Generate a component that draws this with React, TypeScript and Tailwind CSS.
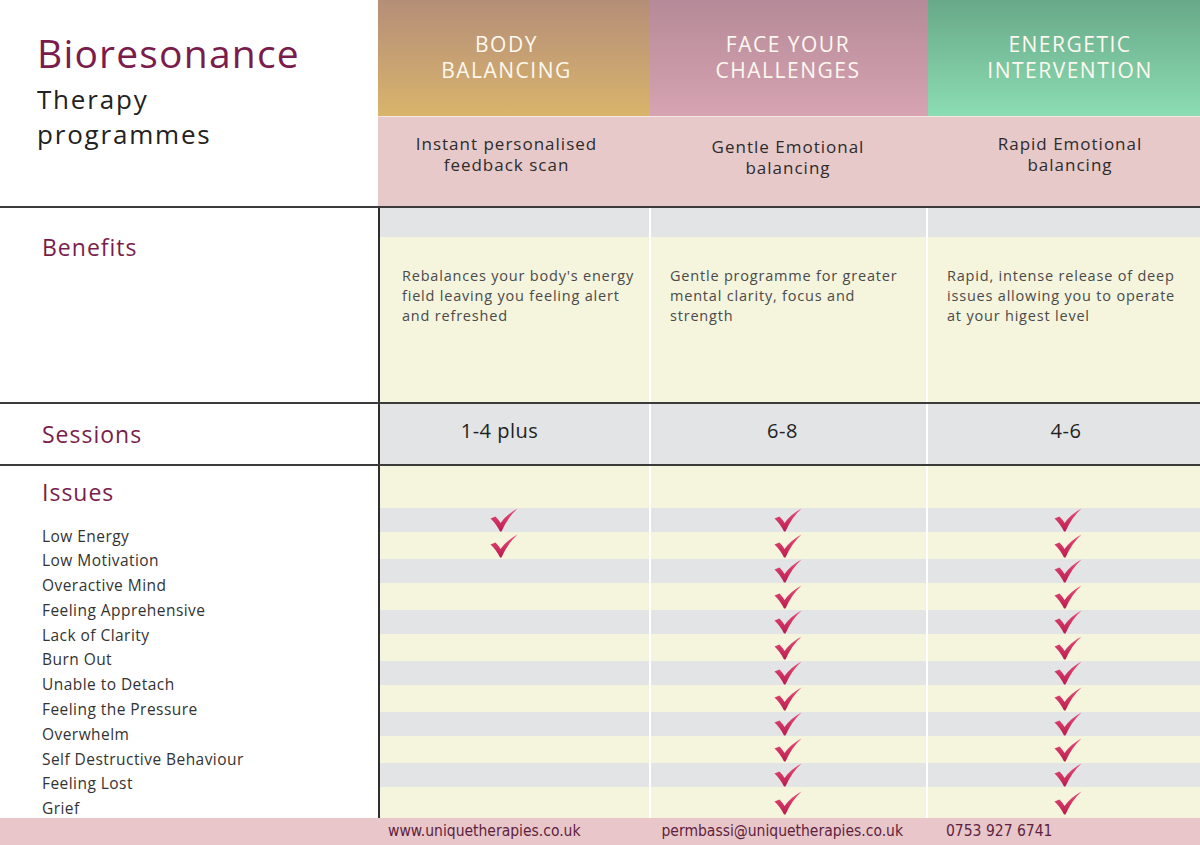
const ISSUES = [
  "Low Energy",
  "Low Motivation",
  "Overactive Mind",
  "Feeling Apprehensive",
  "Lack of Clarity",
  "Burn Out",
  "Unable to Detach",
  "Feeling the Pressure",
  "Overwhelm",
  "Self Destructive Behaviour",
  "Feeling Lost",
  "Grief",
];

const PROGRAMMES = [
  {
    title: ["BODY", "BALANCING"],
    bg: "bg-gradient-to-b from-[#b58e78] to-[#d9b46a]",
    headPad: "pr-[15px]",
    sub: ["Instant personalised", "feedback scan"],
    subPad: "pt-[16px]",
    benefit: "Rebalances your body's energy field leaving you feeling alert and refreshed",
    benefitPad: "pl-[22px] pr-[8px]",
    sessions: "1-4 plus",
    sessionsPad: "pr-[30px]",
    checks: 2,
    checkPad: "pr-[22px]",
  },
  {
    title: ["FACE YOUR", "CHALLENGES"],
    bg: "bg-gradient-to-b from-[#b68a98] to-[#d6a3b2]",
    headPad: "pr-[2px]",
    sub: ["Gentle Emotional", "balancing"],
    subPad: "pt-[19px]",
    benefit: "Gentle programme for greater mental clarity, focus and strength",
    benefitPad: "pl-[19px] pr-[12px]",
    sessions: "6-8",
    sessionsPad: "pr-[12px]",
    checks: 12,
    checkPad: "pr-[2px]",
  },
  {
    title: ["ENERGETIC", "INTERVENTION"],
    bg: "bg-gradient-to-b from-[#68a989] to-[#8cddb3]",
    headPad: "pl-[12px]",
    sub: ["Rapid Emotional", "balancing"],
    subPad: "pt-[16px]",
    benefit: "Rapid, intense release of deep issues allowing you to operate at your higest level",
    benefitPad: "pl-[19px] pr-[10px]",
    sessions: "4-6",
    sessionsPad: "pl-[4px]",
    checks: 12,
    checkPad: "pl-[8px]",
  },
];

function Tick() {
  return (
    <svg width="28" height="24" viewBox="0 0 28 24">
      <defs>
        <linearGradient id="tickFill" x1="0" y1="0" x2="0" y2="1">
          <stop offset="0" stopColor="#ec4f7c" />
          <stop offset="1" stopColor="#b81c4e" />
        </linearGradient>
      </defs>
      <path
        d="M0.5 10.5 L5.5 8.5 Q8.5 11.5 10.5 15 Q17 6 27.5 0.5 Q18 9 11.5 23.5 L10 23.5 Q6 15.5 0.5 10.5 Z"
        fill="url(#tickFill)"
      />
    </svg>
  );
}

const rowGrid = "grid grid-cols-[269px_275px_1fr] gap-[2px] bg-white";
const rule = "h-[2px] shrink-0 bg-[#3b3b3b]";

export default function App() {
  return (
    <div className="flex flex-col w-[1200px] h-[845px] bg-white overflow-hidden font-['Open_Sans',sans-serif]">
      {/* header */}
      <div className="flex h-[206px] shrink-0">
        <div className="w-[378px] pl-[37px] pt-[28px]">
          <h1 className="text-[39px] leading-[50px] text-[#7a1d4c] tracking-[1.2px]">Bioresonance</h1>
          <p className="mt-[4px] text-[26px] leading-[35px] tracking-[1.8px] text-[#222]">
            Therapy
            <br />
            programmes
          </p>
        </div>
        <div className="flex-1 grid grid-cols-[272px_278px_1fr]">
          {PROGRAMMES.map((p) => (
            <div key={p.title[0]} className="flex flex-col">
              <div className={`h-[116px] flex flex-col items-center justify-center pb-[3px] ${p.headPad} ${p.bg}`}>
                {p.title.map((t) => (
                  <span key={t} className="text-[21px] leading-[26px] tracking-[1.5px] text-[#fdf9f0]">
                    {t}
                  </span>
                ))}
              </div>
              <div className="h-[1px] bg-[#f3e7e4]" />
              <div className={`flex-1 bg-[#e8c9ca] flex flex-col items-center ${p.headPad} ${p.subPad}`}>
                {p.sub.map((s) => (
                  <span key={s} className="text-[17px] leading-[21px] tracking-[1px] text-[#2c2c2c]">
                    {s}
                  </span>
                ))}
              </div>
            </div>
          ))}
        </div>
      </div>

      <div className={rule} />

      {/* benefits */}
      <div className="flex h-[194px] shrink-0">
        <div className="w-[380px] pl-[42px] pt-[24px] border-r-2 border-[#2f2f2f]">
          <h2 className="text-[23px] leading-[30px] tracking-[1px] text-[#7a1d4c]">Benefits</h2>
        </div>
        <div className={`flex-1 ${rowGrid}`}>
          {PROGRAMMES.map((p) => (
            <div key={p.title[0]} className="flex flex-col">
              <div className="h-[29px] bg-[#e3e4e5]" />
              <div className={`flex-1 bg-[#f5f4dd] pt-[29px] ${p.benefitPad}`}>
                <p className="text-[14.5px] leading-[20px] tracking-[0.8px] text-[#4a4a4a]">{p.benefit}</p>
              </div>
            </div>
          ))}
        </div>
      </div>

      <div className={rule} />

      {/* sessions */}
      <div className="flex h-[60px] shrink-0">
        <div className="w-[380px] pl-[42px] flex items-center border-r-2 border-[#2f2f2f]">
          <h2 className="text-[23px] leading-[30px] tracking-[1px] text-[#7a1d4c]">Sessions</h2>
        </div>
        <div className={`flex-1 ${rowGrid}`}>
          {PROGRAMMES.map((p) => (
            <div
              key={p.title[0]}
              className={`bg-[#e3e4e5] flex items-center justify-center pb-[6px] ${p.sessionsPad}`}
            >
              <span className="text-[20px] leading-[26px] tracking-[0.5px] text-[#222]">{p.sessions}</span>
            </div>
          ))}
        </div>
      </div>

      <div className={rule} />

      {/* issues */}
      <div className="flex flex-1 min-h-0">
        <div className="w-[380px] pl-[42px] pt-[12px] border-r-2 border-[#2f2f2f] overflow-hidden">
          <h2 className="text-[23px] leading-[28px] tracking-[1px] text-[#7a1d4c]">Issues</h2>
          <ul className="mt-[17.5px]">
            {ISSUES.map((i) => (
              <li key={i} className="text-[15.5px] leading-[24.8px] tracking-[0.45px] text-[#333]">
                {i}
              </li>
            ))}
          </ul>
        </div>
        <div className="flex-1 flex flex-col">
          <div className={`h-[42px] shrink-0 ${rowGrid}`}>
            <div className="bg-[#f5f4dd]" />
            <div className="bg-[#f5f4dd]" />
            <div className="bg-[#f5f4dd]" />
          </div>
          {ISSUES.map((issue, idx) => {
            const gray = idx % 2 === 0;
            const last = idx === ISSUES.length - 1;
            return (
              <div
                key={issue}
                className={`${rowGrid} ${last ? "flex-1" : gray ? "h-[24px] shrink-0" : "h-[27px] shrink-0"}`}
              >
                {PROGRAMMES.map((p) => (
                  <div
                    key={p.title[0]}
                    className={`flex items-center justify-center ${p.checkPad} ${
                      gray ? "bg-[#e3e4e5]" : "bg-[#f5f4dd]"
                    }`}
                  >
                    {idx < p.checks && <Tick />}
                  </div>
                ))}
              </div>
            );
          })}
        </div>
      </div>

      {/* footer */}
      <div className="h-[27px] shrink-0 bg-[#e8c6c9] flex items-center font-['DejaVu_Sans_Condensed','Liberation_Sans_Narrow',sans-serif] text-[15.5px] text-[#5e1f40]">
        <span className="ml-[388px]">www.uniquetherapies.co.uk</span>
        <span className="ml-[81px]">permbassi@uniquetherapies.co.uk</span>
        <span className="ml-[43px]">0753 927 6741</span>
      </div>
    </div>
  );
}
